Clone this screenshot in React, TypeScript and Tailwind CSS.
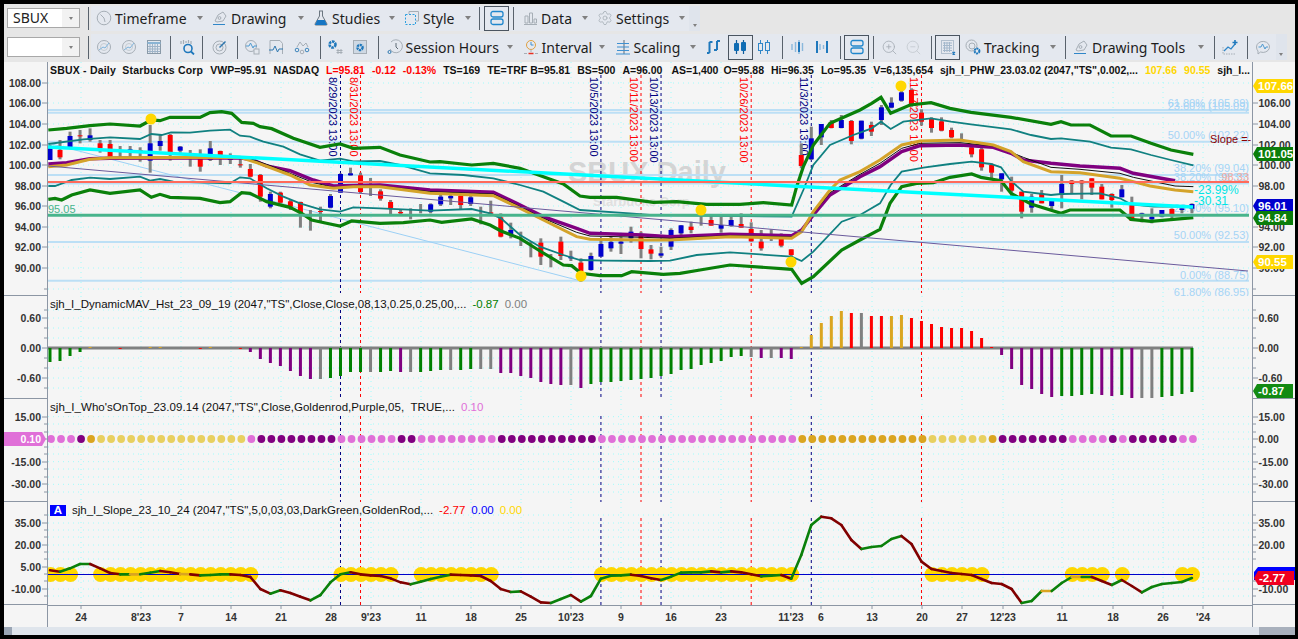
import { Settings, ZoomIn, ZoomOut } from 'lucide-react'
import type { ReactNode } from 'react'

const X = (i: number) => 50 + i * 10.017

// chart coordinates below were read off 3x crops: [x in crop, y in crop]
type Pts = number[][]
const crop = (ox: number, pts: Pts) => pts.map(([x, y]) => [ox + x / 3, 60 + y / 3])
const poly = (...parts: Pts[]) => parts.flat().map(p => p.join(',')).join(' ')

const upperGreen = poly(
  crop(0, [[145, 210], [200, 205], [270, 197], [330, 192], [420, 198], [454, 180], [480, 182], [510, 172], [600, 172], [630, 158], [665, 155], [695, 160], [725, 187], [760, 190], [780, 200], [815, 206], [880, 235], [960, 262], [1020, 252], [1060, 265], [1140, 262], [1200, 285], [1290, 306]]),
  crop(430, [[30, 305], [125, 315], [190, 310], [270, 325], [340, 350], [400, 372], [450, 408], [480, 412], [560, 412], [670, 427], [740, 425], [830, 433], [930, 433], [1000, 428], [1085, 435], [1100, 380], [1120, 320], [1150, 255], [1200, 190], [1290, 150]]),
  crop(860, [[35, 130], [63, 112], [92, 160], [150, 135], [213, 128], [270, 145], [333, 157], [453, 172], [573, 193], [603, 185], [633, 195], [690, 195], [753, 228], [813, 228], [873, 250], [933, 270], [1000, 283]]),
)
const upperTeal = poly(
  crop(0, [[145, 252], [250, 238], [330, 232], [420, 237], [454, 222], [485, 225], [513, 217], [570, 218], [630, 212], [690, 209], [720, 227], [750, 230], [790, 245], [850, 260], [900, 283], [960, 302], [1020, 296], [1060, 304], [1140, 303], [1200, 315], [1290, 340]]),
  crop(430, [[100, 345], [190, 355], [270, 375], [340, 395], [400, 425], [450, 450], [600, 460], [660, 465], [1085, 470], [1120, 390], [1150, 315], [1200, 255], [1270, 225], [1290, 218]]),
  crop(860, [[35, 205], [63, 185], [92, 207], [130, 185], [213, 175], [273, 185], [333, 193], [453, 208], [513, 225], [573, 237], [603, 235], [690, 245], [753, 263], [813, 268], [873, 285], [933, 300], [1000, 316]]),
)
const lowerTeal = poly(
  crop(0, [[145, 378], [165, 378], [215, 360], [270, 353], [330, 357], [420, 350], [450, 362], [480, 357], [520, 365], [690, 370], [720, 352], [750, 355], [800, 385], [850, 410], [900, 430], [960, 448], [1020, 455], [1060, 442], [1140, 445], [1290, 452]]),
  crop(430, [[125, 447], [180, 460], [213, 475], [270, 525], [330, 560], [400, 585], [450, 600], [520, 602], [660, 603], [720, 602], [800, 585], [900, 577], [1085, 590], [1115, 603], [1150, 575], [1235, 485], [1290, 465]]),
  crop(860, [[60, 430], [92, 375], [125, 335], [190, 323], [270, 312], [335, 305], [393, 312], [423, 322], [453, 363], [490, 395], [573, 405], [603, 402], [720, 400], [780, 415], [813, 433], [880, 440], [1000, 440]]),
)
const lowerGreen = poly(
  crop(0, [[145, 418], [165, 415], [185, 420], [215, 405], [270, 390], [330, 400], [420, 390], [454, 412], [480, 403], [510, 412], [600, 415], [660, 428], [690, 425], [725, 398], [750, 400], [800, 425], [870, 442], [905, 460], [935, 480], [990, 492], [1020, 498], [1055, 483], [1140, 490], [1210, 488], [1290, 480]]),
  crop(430, [[35, 487], [125, 477], [180, 495], [213, 513], [270, 535], [330, 573], [400, 615], [425, 617], [453, 640], [510, 647], [575, 647], [605, 635], [700, 643], [750, 640], [810, 630], [900, 615], [1085, 628], [1115, 670], [1150, 650], [1235, 570], [1290, 540]]),
  crop(860, [[60, 508], [90, 430], [125, 380], [170, 370], [220, 368], [270, 352], [335, 342], [363, 352], [423, 362], [453, 400], [513, 432], [603, 460], [630, 450], [780, 450], [813, 478], [873, 484], [1000, 473]]),
)
const purple = poly(
  crop(0, [[145, 312], [200, 308], [270, 296], [330, 295], [720, 293], [760, 300], [800, 318], [870, 332], [940, 360], [1000, 378], [1140, 375], [1290, 390]]),
  crop(430, [[190, 397], [260, 430], [340, 470], [440, 505], [480, 520], [640, 525], [720, 530], [900, 523], [1085, 527], [1115, 510], [1150, 465], [1200, 405], [1290, 350]]),
  crop(860, [[60, 320], [125, 275], [180, 257], [300, 255], [400, 262], [453, 280], [490, 300], [573, 310], [660, 318], [780, 325], [820, 340], [945, 362]]),
)
const blackMa = poly(
  crop(0, [[750, 296], [800, 313], [870, 340], [940, 368], [1000, 382], [1140, 378], [1290, 395]]),
  crop(430, [[190, 402], [260, 435], [340, 475], [440, 517], [480, 528], [640, 532], [720, 535], [900, 527], [1085, 531], [1115, 512], [1150, 460], [1200, 398], [1290, 343]]),
  crop(860, [[60, 310], [125, 265], [180, 250], [300, 248], [400, 258], [453, 277], [490, 292], [573, 322], [660, 328], [780, 340], [820, 352], [945, 378], [1000, 380]]),
)
const gold = poly(
  crop(0, [[145, 320], [200, 315], [270, 298], [330, 293], [720, 292], [770, 308], [870, 345], [930, 375], [1000, 385], [1060, 380], [1140, 380], [1290, 400]]),
  crop(430, [[190, 407], [260, 440], [340, 480], [440, 530], [480, 538], [640, 540], [720, 540], [900, 530], [1085, 535], [1115, 515], [1150, 455], [1200, 390], [1230, 360], [1290, 335]]),
  crop(860, [[60, 300], [125, 255], [180, 243], [300, 240], [400, 255], [453, 275], [490, 305], [573, 335], [660, 338], [780, 355], [820, 365], [870, 378], [945, 390], [1000, 395]]),
)

// wick top, wick bottom, body top, body bottom, colour
const candles: [number, number, number, number, string][] = [
  [255, 300, 265, 300, 'b'], [240, 298, 270, 292, 'r'], [215, 265, 228, 262, 'b'], [210, 250, 226, 228, 'r'], [205, 245, 226, 240, 'b'],
  [240, 278, 250, 265, 'r'], [240, 290, 252, 290, 'r'], [258, 292, 0, 0, 'g'], [258, 292, 268, 276, 'b'], [262, 305, 270, 272, 'r'],
  [195, 338, 250, 302, 'b'], [225, 272, 243, 258, 'b'], [222, 302, 225, 278, 'r'], [258, 278, 260, 272, 'b'], [270, 320, 0, 0, 'g'],
  [268, 335, 295, 320, 'r'], [243, 303, 265, 300, 'b'], [272, 315, 273, 288, 'r'], [280, 312, 288, 300, 'b'], [290, 323, 313, 315, 'r'],
  [312, 352, 327, 350, 'r'], [342, 425, 345, 410, 'r'], [395, 445, 402, 440, 'b'], [395, 430, 398, 428, 'r'], [418, 450, 424, 440, 'r'],
  [425, 503, 426, 460, 'r'], [450, 512, 0, 0, 'g'], [440, 487, 453, 455, 'r'], [402, 445, 408, 443, 'b'], [340, 398, 342, 398, 'b'],
  [323, 347, 340, 346, 'b'], [338, 400, 346, 396, 'r'], [354, 408, 0, 0, 'g'], [388, 422, 394, 416, 'r'], [420, 462, 426, 445, 'r'],
  [448, 462, 456, 460, 'r'], [445, 478, 0, 0, 'g'], [432, 460, 0, 0, 'g'], [430, 460, 433, 455, 'b'], [400, 438, 410, 433, 'b'],
  [395, 435, 408, 415, 'b'], [395, 450, 408, 435, 'r'], [400, 438, 412, 432, 'b'], [440, 493, 0, 0, 'g'], [422, 465, 457, 461, 'r'],
  [460, 532, 472, 530, 'r'], [488, 535, 510, 522, 'b'], [515, 558, 0, 0, 'g'], [545, 592, 0, 0, 'g'], [535, 615, 548, 590, 'r'],
  [582, 622, 0, 0, 'g'], [530, 600, 545, 588, 'r'], [572, 603, 590, 595, 'b'], [595, 665, 608, 633, 'r'], [578, 632, 588, 630, 'b'],
  [535, 590, 552, 590, 'b'], [530, 575, 546, 565, 'b'], [530, 582, 545, 551, 'b'], [500, 548, 515, 535, 'b'], [515, 595, 522, 567, 'r'],
  [555, 598, 568, 581, 'r'], [560, 592, 580, 587, 'b'], [505, 570, 510, 560, 'b'], [495, 535, 496, 520, 'b'], [485, 520, 500, 510, 'r'],
  [440, 497, 0, 0, 'g'], [465, 497, 480, 497, 'r'], [470, 518, 495, 506, 'b'], [470, 500, 480, 498, 'b'], [460, 503, 492, 503, 'r'],
  [487, 545, 507, 544, 'r'], [510, 572, 545, 565, 'r'], [508, 543, 0, 0, 'g'], [520, 562, 537, 557, 'r'], [568, 588, 568, 585, 'r'],
  [250, 325, 285, 318, 'r'], [200, 300, 235, 298, 'b'], [195, 255, 192, 232, 'b'], [180, 205, 186, 204, 'r'], [165, 205, 180, 204, 'b'],
  [180, 253, 183, 243, 'r'], [182, 238, 182, 236, 'b'], [185, 228, 195, 215, 'r'], [135, 195, 142, 180, 'b'], [112, 145, 128, 143, 'b'],
  [90, 125, 97, 122, 'b'], [85, 140, 90, 135, 'r'], [148, 197, 158, 185, 'r'], [172, 218, 175, 204, 'r'], [172, 214, 184, 212, 'r'],
  [203, 235, 210, 232, 'r'], [220, 245, 0, 0, 'g'], [258, 292, 262, 283, 'r'], [260, 332, 268, 322, 'r'], [310, 355, 315, 338, 'r'],
  [340, 395, 340, 358, 'b'], [350, 415, 365, 392, 'r'], [395, 475, 395, 455, 'r'], [402, 458, 410, 443, 'b'], [390, 430, 400, 430, 'r'],
  [420, 447, 422, 438, 'b'], [345, 445, 372, 405, 'b'], [360, 400, 362, 372, 'r'], [360, 418, 362, 370, 'r'], [355, 405, 355, 383, 'r'],
  [372, 418, 380, 418, 'r'], [400, 443, 402, 420, 'r'], [375, 412, 388, 412, 'b'], [410, 480, 433, 482, 'r'], [458, 487, 460, 465, 'b'],
  [445, 490, 470, 478, 'b'], [450, 472, 450, 470, 'b'], [445, 475, 447, 463, 'r'], [445, 460, 445, 450, 'b'], [430, 460, 432, 446, 'b'],
]
const candleFill: Record<string, string> = { b: '#0000cd', r: '#ff0000' }

// positive = below the zero line, px
const hist: [number, string][] = [
  [14, 'g'], [13, 'g'], [8, 'g'], [4, 'g'], [-1, 'y'], [0, 'x'], [0, 'x'], [1, 'r'], [0, 'x'], [0, 'x'], [-1, 'y'], [-1, 'y'], [0, 'x'], [0, 'x'], [0, 'x'], [1, 'r'], [-1, 'y'], [0, 'x'], [0, 'x'], [1, 'r'],
  [4, 'p'], [11, 'p'], [15, 'p'], [18, 'p'], [23, 'p'], [28, 'p'], [31, 'p'], [31, 'a'], [30, 'g'], [28, 'g'], [24, 'g'], [24, 'g'], [24, 'a'], [24, 'g'], [23, 'g'], [24, 'p'], [24, 'a'], [24, 'g'], [23, 'g'], [22, 'g'],
  [22, 'a'], [22, 'g'], [21, 'g'], [21, 'a'], [21, 'a'], [25, 'p'], [25, 'p'], [28, 'p'], [30, 'p'], [34, 'p'], [36, 'p'], [37, 'p'], [37, 'a'], [40, 'p'], [36, 'g'], [34, 'g'], [34, 'g'], [33, 'g'], [32, 'g'], [31, 'g'],
  [30, 'g'], [28, 'g'], [26, 'g'], [22, 'g'], [21, 'g'], [17, 'g'], [15, 'g'], [13, 'g'], [9, 'g'], [8, 'g'], [9, 'a'], [10, 'p'], [10, 'a'], [10, 'p'], [11, 'p'], [-1, 'y'], [-13, 'y'], [-25, 'y'], [-32, 'y'], [-37, 'y'],
  [-35, 'r'], [-35, 'a'], [-32, 'r'], [-32, 'r'], [-32, 'y'], [-33, 'y'], [-30, 'r'], [-27, 'r'], [-24, 'r'], [-21, 'r'], [-20, 'r'], [-20, 'r'], [-17, 'r'], [-10, 'r'], [-1, 'r'], [7, 'p'], [21, 'p'], [37, 'p'], [41, 'p'], [46, 'p'],
  [49, 'p'], [48, 'g'], [48, 'g'], [47, 'g'], [46, 'g'], [47, 'p'], [48, 'p'], [47, 'g'], [50, 'p'], [50, 'a'], [50, 'a'], [49, 'g'], [48, 'g'], [46, 'g'], [44, 'g'],
]
const histFill: Record<string, string> = { g: '#008000', p: '#800080', a: '#808080', y: '#daa520', r: '#ff0000', x: 'none' }

// run ends of the dot colours
const dotRuns: [number, string][] = [
  [2, '#e070d8'], [3, '#800080'], [4, '#daa520'], [19, '#e8d060'], [20, '#e070d8'], [28, '#800080'], [34, '#e070d8'], [36, '#800080'], [44, '#e070d8'], [54, '#800080'], [74, '#e070d8'],
  [87, '#daa520'], [93, '#e8d060'], [94, '#daa520'], [101, '#800080'], [105, '#e070d8'], [106, '#800080'], [107, '#e070d8'], [112, '#800080'], [114, '#e070d8'],
]
const dotColor = (i: number) => dotRuns.find(r => i <= r[0])![1]

const slope = [
  226, 230, 220, 207, 207, 220, 234, 238, 238, 238, 233, 228, 232, 237, 238, 241, 240, 238, 238, 240, 246, 282, 296, 286, 294, 305, 316, 300, 262, 238,
  232, 238, 241, 243, 250, 262, 268, 260, 252, 245, 239, 240, 241, 243, 258, 282, 291, 289, 305, 322, 324, 312, 300, 320, 303, 251, 242, 241, 239, 243,
  250, 255, 245, 233, 232, 232, 229, 232, 229, 232, 238, 244, 242, 240, 251, 180, 90, 65, 70, 90, 135, 162, 156, 153, 132, 123, 147, 200, 222, 228,
  234, 237, 240, 252, 264, 267, 282, 324, 318, 288, 288, 264, 246, 246, 246, 258, 270, 255, 273, 292, 276, 267, 264, 261, 249,
]
const slopeGold = [8, 13, 99, 102]
const slopeY = (i: number) => 495 + slope[i] / 3
const slopeDots = [[0, 2], [5, 20], [29, 34], [37, 44], [55, 74], [88, 93], [102, 105], [107, 107], [113, 114]]

const dashes = [
  { i: 29, c: '#000080', t: '8/29/2023 13:00' },
  { i: 31, c: '#ff0000', t: '8/31/2023 13:00' },
  { i: 55, c: '#000080', t: '10/5/2023 13:00' },
  { i: 59, c: '#ff0000', t: '10/11/2023 13:00' },
  { i: 61, c: '#000080', t: '10/13/2023 13:00' },
  { i: 70, c: '#ff0000', t: '10/26/2023 13:00' },
  { i: 76, c: '#000080', t: '11/3/2023 13:00' },
  { i: 87, c: '#ff0000', t: '11/17/2023 13:00' },
]

const dateTicks: [number, string][] = [
  [81, '24'], [141, "8'23"], [181, '7'], [231, '14'], [281, '21'], [331, '28'], [371, "9'23"], [421, '11'], [471, '18'], [521, '25'], [571, "10'23"], [621, '9'],
  [671, '16'], [721, '23'], [791, "11'23"], [821, '6'], [872, '13'], [922, '20'], [962, '27'], [1003, "12'23"], [1062, '11'], [1113, '18'], [1163, '26'], [1203, "'24"],
]

const fibLabels: [number, string][] = [
  [107, '61.80% (105.89)'], [110, '23.60% (105.09)'], [139, '50.00% (102.22)'], [172, '38.20% (99.04)'], [181, '38.20% (98.35)'],
  [212, '23.60% (95.10)'], [239, '50.00% (92.53)'], [279, '0.00% (88.75)'], [296, '61.80% (86.95)'],
]

function Grid({ top, bottom, rows }: { top: number; bottom: number; rows: number[] }) {
  return (
    <g stroke="#9ffcfc" strokeWidth={1} strokeDasharray="1 4">
      {rows.map(y => <line key={y} x1={48} x2={1252} y1={y} y2={y} />)}
      {dateTicks.map(([x]) => <line key={x} x1={x} x2={x} y1={top} y2={bottom} />)}
    </g>
  )
}

function Dashes({ top, bottom }: { top: number; bottom: number }) {
  return (
    <g strokeWidth={1} strokeDasharray="3 3">
      {dashes.map(d => <line key={d.i} x1={X(d.i)} x2={X(d.i)} y1={top} y2={bottom} stroke={d.c} />)}
    </g>
  )
}

function AxisLabels({ side, top, height, labels, minor = [], children }: {
  side: 'l' | 'r'
  top: number
  height: number
  labels: [number, string][]
  minor?: number[]
  children?: ReactNode
}) {
  const left = side === 'l'
  const x1 = left ? 42 : 1253
  const x2 = left ? 47 : 1258
  return (
    <svg viewBox={`${left ? 4 : 1253} ${top} ${left ? 43 : 42} ${height}`} className={`block h-full ${left ? 'w-[43px]' : 'w-[42px]'}`}>
      {labels.map(([y, t]) => (
        <g key={t}>
          <line x1={x1} x2={x2} y1={y} y2={y} stroke="#8c96a4" />
          <text x={left ? 41 : 1258.5} y={y + 4} textAnchor={left ? 'end' : 'start'} className="fill-[#333] text-[10.5px] font-bold">{t}</text>
        </g>
      ))}
      {minor.map(y => <line key={y} x1={x1 + (left ? 2 : 0)} x2={x2 - (left ? 0 : 2)} y1={y} y2={y} stroke="#8c96a4" />)}
      {children}
    </svg>
  )
}

function Tag({ y, fill, text, x = 1253, w = 40, color = 'white' }: { y: number; fill: string; text: string; x?: number; w?: number; color?: string }) {
  return (
    <g>
      <polygon points={`${x},${y} ${x + 4},${y - 7} ${x + w},${y - 7} ${x + w},${y + 7} ${x + 4},${y + 7}`} fill={fill} />
      <text x={x + 5} y={y + 4} fill={color} className="text-[11.5px] font-bold">{text}</text>
    </g>
  )
}

function Pane({ className, left, right, children }: { className: string; left: ReactNode; right: ReactNode; children: ReactNode }) {
  return (
    <div className={`flex shrink-0 ${className}`}>
      <div className="w-[44px] border-r border-b border-[#8c96a4]">{left}</div>
      <div className="relative w-[1204px] overflow-hidden">{children}</div>
      <div className="w-[43px] border-l border-b border-[#8c96a4]">{right}</div>
    </div>
  )
}

function Legend({ className = '', children }: { className?: string; children: ReactNode }) {
  return <div className={`absolute left-[2px] flex items-center whitespace-pre text-[#111] ${className}`}>{children}</div>
}

function MainPane() {
  return (
    <Pane
      className="h-[234px]"
      left={
        <AxisLabels side="l" top={62} height={233} minor={[289]} labels={[[83, '108.00'], [103, '106.00'], [124, '104.00'], [145, '102.00'], [165, '100.00'], [186, '98.00'], [206, '96.00'], [227, '94.00'], [247, '92.00'], [268, '90.00']]} />
      }
      right={
        <AxisLabels side="r" top={62} height={233} minor={[289]} labels={[[103, '106.00'], [124, '104.00'], [145, '102.00'], [165, '100.00'], [186, '98.00'], [227, '94.00'], [247, '92.00'], [268, '90.00']]}>
          <Tag y={86} fill="#ffd700" text="107.66" />
          <Tag y={154} fill="#0a7d0a" text="101.05" />
          <Tag y={206} fill="#0000cd" text="96.01" />
          <Tag y={218} fill="#0a7d0a" text="94.84" />
          <Tag y={262} fill="#ffd700" text="90.55" />
        </AxisLabels>
      }
    >
      <svg viewBox="48 62 1204 234" className="block h-[234px] w-[1204px]">
        <Grid top={62} bottom={296} rows={[83, 103, 124, 145, 165, 186, 206, 227, 247, 268, 289]} />
        <text x={568} y={182} className="fill-[#d4d4d4] text-[29px] font-bold">SBUX Daily</text>
        <text x={593} y={206} className="fill-[#e0e0e0] text-[13px] font-bold">Starbucks Corp</text>
        <g stroke="#bcdff5" strokeWidth={2}>
          {[110, 112.7, 141.7, 175, 183.5, 242, 280.7].map(y => <line key={y} x1={48} x2={1249} y1={y} y2={y} />)}
        </g>
        <line x1={48} y1={143} x2={581} y2={281} stroke="#9cd0f5" />
        <Dashes top={75} bottom={293} />
        {dashes.map(d => (
          <text key={d.i} transform={`translate(${X(d.i) - 11},77) rotate(90)`} fill={d.c} className="text-[11px]">{d.t}</text>
        ))}
        {fibLabels.map(([y, t]) => (
          <text key={t} x={1249} y={y} textAnchor="end" className="fill-[#a5d4f5] text-[11px]">{t}</text>
        ))}
        <text x={1249} y={181} textAnchor="end" className="fill-[#f4a9a0] text-[11px]">98.33</text>
        {candles.map(([wt, wb, bt, bb, c], i) => (
          <g key={i}>
            <rect x={X(i) - 1.5} y={60 + wt / 3} width={3} height={(wb - wt) / 3} fill="#808080" />
            {bb > 0 && <rect x={X(i) - 2.5} y={60 + bt / 3} width={5} height={Math.max((bb - bt) / 3, 1)} fill={candleFill[c]} />}
          </g>
        ))}
        <polyline points={upperTeal} fill="none" stroke="#108080" strokeWidth={1.8} />
        <polyline points={lowerTeal} fill="none" stroke="#108080" strokeWidth={1.8} />
        <polyline points={upperGreen} fill="none" stroke="#0a800a" strokeWidth={3.2} />
        <polyline points={lowerGreen} fill="none" stroke="#0a800a" strokeWidth={3.2} />
        <polyline points={purple} fill="none" stroke="#800080" strokeWidth={3.5} />
        <polyline points={blackMa} fill="none" stroke="#111" strokeWidth={1} />
        <polyline points={gold} fill="none" stroke="#d4a32a" strokeWidth={3} />
        <line x1={48} y1={166} x2={1248} y2={271} stroke="#6a5a9c" />
        <line x1={48} y1={147} x2={1193} y2={207} stroke="#00ffff" strokeWidth={3.5} />
        <line x1={48} y1={182} x2={1249} y2={182} stroke="#ff6a5a" strokeWidth={2} />
        <line x1={48} y1={215.3} x2={1249} y2={215.3} stroke="#48b48c" strokeWidth={3} />
        {[[151, 119], [581, 276], [701, 210], [791, 262], [901, 86]].map(([x, y]) => <circle key={x} cx={x} cy={y} r={5.5} fill="#ffd700" />)}
        <text x={48} y={213} className="fill-[#48b48c] text-[11px]">95.05</text>
        <text x={1210} y={143} className="fill-[#8b0000] text-[11px]">Slope =-</text>
        <text x={1194} y={194} className="fill-[#00e5e5] text-[12px]">-23.99%</text>
        <text x={1194} y={205} className="fill-[#00e5e5] text-[12px]">-30.31</text>
      </svg>
      <Legend className="top-[1px] gap-[7px] text-[10.5px] font-bold">
        <span className="tracking-[0.2px]">SBUX - Daily  Starbucks Corp</span>
        <span>VWP=95.91</span>
        <span>NASDAQ</span>
        <span className="text-[#ff0000]">L=95.81</span>
        <span className="text-[#ff0000]">-0.12</span>
        <span className="text-[#ff0000]">-0.13%</span>
        <span>TS=169</span>
        <span>TE=TRF</span>
        <span className="-ml-[4px]">B=95.81</span>
        <span>BS=500</span>
        <span>A=96.00</span>
        <span className="ml-[2px]">AS=1,400</span>
        <span className="-ml-[2px]">O=95.88</span>
        <span>Hi=96.35</span>
        <span>Lo=95.35</span>
        <span>V=6,135,654</span>
        <span>sjh_I_PHW_23.03.02 (2047,"TS",0.002,...</span>
        <span className="text-[#ffd700]">107.66</span>
        <span className="text-[#ffd700]">90.55</span>
        <span>sjh_I...</span>
      </Legend>
    </Pane>
  )
}

function HistPane() {
  return (
    <Pane
      className="h-[103px]"
      left={<AxisLabels side="l" top={296} height={102} minor={[310, 328, 338, 358, 368, 388]} labels={[[318, '0.60'], [348, '0.00'], [378, '-0.60']]} />}
      right={
        <AxisLabels side="r" top={296} height={102} minor={[310, 328, 338, 358, 368]} labels={[[318, '0.60'], [348, '0.00'], [378, '-0.60']]}>
          <Tag y={391} fill="#128a12" text="-0.87" />
        </AxisLabels>
      }
    >
      <svg viewBox="48 296 1204 103" className="block h-[103px] w-[1204px]">
        <Grid top={296} bottom={399} rows={[310, 318, 328, 338, 348, 358, 368, 378, 388]} />
        <Dashes top={310} bottom={399} />
        <rect x={48} y={346.5} width={1145} height={3} fill="#808080" />
        {hist.map(([v, c], i) => (
          <rect key={i} x={X(i) - 1.5} y={v > 0 ? 348 : 348 + v} width={3} height={Math.abs(v)} fill={histFill[c]} />
        ))}
      </svg>
      <Legend className="top-0 gap-[6px] text-[11.5px]">
        <span>sjh_I_DynamicMAV_Hst_23_09_19 (2047,"TS",Close,Close,08,13,0.25,0.25,00,...</span>
        <span className="text-[#008000]">-0.87</span>
        <span className="text-[#808080]">0.00</span>
      </Legend>
    </Pane>
  )
}

function DotsPane() {
  const rows = [416.7, 424, 432, 439, 447, 454, 461.7, 469, 477, 484.3, 492]
  return (
    <Pane
      className="h-[103px]"
      left={
        <AxisLabels side="l" top={399} height={102} minor={[424, 432, 447, 454, 469, 477, 492]} labels={[[417, '15.00'], [439, '0.10'], [462, '-15.00'], [484, '-30.00']]}>
          <polygon points="4,432 42,432 46,439 42,446 4,446" fill="#e070d8" />
          <text x={41} y={443} textAnchor="end" className="fill-white text-[10.5px] font-bold">0.10</text>
        </AxisLabels>
      }
      right={<AxisLabels side="r" top={399} height={102} minor={[424, 432, 447, 454, 469, 477, 492]} labels={[[417, '15.00'], [439, '0.00'], [462, '-15.00'], [484, '-30.00']]} />}
    >
      <svg viewBox="48 399 1204 103" className="block h-[103px] w-[1204px]">
        <Grid top={399} bottom={502} rows={rows} />
        <Dashes top={416} bottom={502} />
        {hist.map((_, i) => <circle key={i} cx={X(i) + 1} cy={439} r={3.9} fill={dotColor(i)} />)}
      </svg>
      <Legend className="top-0 gap-[6px] text-[11.5px]">
        <span className="tracking-[0.05px]">sjh_I_Who'sOnTop_23.09.14 (2047,"TS",Close,Goldenrod,Purple,05,  TRUE,...</span>
        <span className="text-[#e070d8]">0.10</span>
      </Legend>
    </Pane>
  )
}

function SlopePane() {
  return (
    <Pane
      className="h-[103px]"
      left={<AxisLabels side="l" top={502} height={102} minor={[515, 530, 537, 552, 559, 574, 581, 596]} labels={[[523, '35.00'], [545, '20.00'], [567, '5.00'], [589, '-10.00']]} />}
      right={
        <AxisLabels side="r" top={502} height={102} minor={[515, 530, 537, 552, 559, 581, 596]} labels={[[523, '35.00'], [545, '20.00'], [589, '-10.00']]}>
          <polygon points="1254,572 1258,567 1295,567 1295,580 1254,580" fill="#0000ff" />
          <Tag y={578} fill="#f00020" text="-2.77" x={1254} />
        </AxisLabels>
      }
    >
      <svg viewBox="48 502 1204 103" className="block h-[103px] w-[1204px]">
        <Grid top={502} bottom={605} rows={[515, 523, 530, 537, 545, 552, 559, 567, 574, 581, 589, 596]} />
        <Dashes top={518} bottom={605} />
        {slopeDots.flatMap(([a, b]) => Array.from({ length: b - a + 1 }, (_, k) => a + k)).map(i => (
          <ellipse key={i} cx={X(i) + 0.5} cy={574.5} rx={7.5} ry={7.5} fill="#ffd700" />
        ))}
        <line x1={48} x2={1193} y1={574.5} y2={574.5} stroke="#0000cd" strokeWidth={1.2} />
        {slope.slice(1).map((v, k) => {
          const c = slopeGold.includes(k) ? '#daa520' : v <= slope[k] ? '#0a800a' : '#800000'
          return <line key={k} x1={X(k)} x2={X(k + 1)} y1={slopeY(k)} y2={slopeY(k + 1)} stroke={c} strokeWidth={2.6} strokeLinecap="round" />
        })}
      </svg>
      <Legend className="top-0 gap-[6px] text-[11.5px]">
        <span className="h-[11px] w-[16px] bg-[#0000ff] text-center leading-[11px] font-bold text-white">A</span>
        <span>sjh_I_Slope_23_10_24 (2047,"TS",5,0,03,03,DarkGreen,GoldenRod,...</span>
        <span className="text-[#ff0000]">-2.77</span>
        <span className="text-[#0000ff]">0.00</span>
        <span className="text-[#ffd700]">0.00</span>
      </Legend>
    </Pane>
  )
}

function DateAxis() {
  return (
    <div className="flex h-[22px] shrink-0">
      <div className="w-[44px] border-r border-[#8c96a4]" />
      <svg viewBox="48 605 1204 22" className="block h-[22px] w-[1204px]">
        <line x1={48} x2={1252} y1={605.5} y2={605.5} stroke="#8c96a4" />
        {dateTicks.map(([x, t]) => (
          <g key={x}>
            <line x1={x} x2={x} y1={605} y2={609} stroke="#8c96a4" />
            <text x={x} y={621} textAnchor="middle" className="fill-[#333] text-[10.5px] font-bold">{t}</text>
          </g>
        ))}
      </svg>
      <div className="w-[43px] border-l border-[#8c96a4]" />
    </div>
  )
}

const BLUE = '#2f86c8'
const GREY = '#a6aeb6'

function Ico({ children }: { children: ReactNode }) {
  return <svg viewBox="0 0 16 16" fill="none" className="h-4 w-4 shrink-0">{children}</svg>
}

const ClockIcon = () => <Ico><circle cx={8} cy={8} r={6.8} stroke={GREY} /><path d="M8 8 4.5 4.5M8 8l1 4" stroke={GREY} /></Ico>
const PenIcon = () => <Ico><path d="M3 11 6 5l5-3 3 4-3 5-6 1Z" stroke={GREY} /><circle cx={7.5} cy={8} r={1.4} stroke={GREY} /><path d="M1 14.5h12" stroke={BLUE} /></Ico>
const FlaskIcon = () => <Ico><path d="M6 1h4M6.5 1v5L2 14q-.4 1 1 1h10q1.4 0 1-1L9.5 6V1" stroke="#6b7680" /><path d="M4.3 10h7.4L14 15H2Z" fill="#1676c4" /></Ico>
const StyleIcon = () => <Ico><path d="M5 4V1.5h9.5V11H12" stroke={GREY} /><rect x={1.5} y={4.5} width={10} height={10} stroke="#2ea0e0" strokeDasharray="2 1.5" /></Ico>
const BarsIcon = () => <Ico><path d="M2 14.5h13" stroke={GREY} /><path d="M3 6h3v7H3zM7.5 3h3v10h-3zM12 9h2.5v4H12z" stroke={GREY} /></Ico>
const LayoutIcon = () => <Ico><rect x={2} y={1.5} width={12} height={5.5} rx={2} stroke="#1f86cc" strokeWidth={1.3} /><rect x={2} y={9} width={12} height={5.5} rx={2} stroke="#1f86cc" strokeWidth={1.3} /></Ico>
const RadarA = () => <Ico><circle cx={8} cy={8} r={6.5} stroke={GREY} /><circle cx={8} cy={8} r={3.5} stroke="#c6ccd2" /><path d="m3 11 4-3 2 1 4-5" stroke="#7fb4dc" /></Ico>
const GridIcon = () => <Ico><rect x={1.5} y={1.5} width={13} height={13} stroke="#8a9aa8" /><path d="M1.5 4h13" stroke="#8ab4d4" strokeWidth={2} /><path d="M4 5v9M6.5 5v9M9 5v9M11.5 5v9M2 7.5h12M2 10h12M2 12.5h12" stroke="#9fb4c8" /></Ico>
const SearchIco = () => <Ico><path d="M2 5V2M4.5 5V1M7 4V2M9.5 4V1M12 5V2" stroke={GREY} strokeWidth={1.2} /><circle cx={9} cy={9.5} r={4} stroke="#1f78bc" strokeWidth={1.6} /><path d="m12 12.5 3 3" stroke="#1f78bc" strokeWidth={1.8} /></Ico>
const TargetIcon = () => <Ico><circle cx={7.5} cy={8.5} r={6.5} stroke={GREY} /><circle cx={7.5} cy={8.5} r={3.5} stroke={GREY} /><path d="m7.5 8.5 6-6" stroke="#2f78b0" strokeWidth={1.5} /></Ico>
const PulseIcon = () => <Ico><circle cx={7} cy={7} r={5.5} stroke={GREY} /><path d="M2 7h3l1.5-3L9 9l1-2h3" stroke="#4f9ad0" /><rect x={10} y={10} width={5} height={5} fill="#e4e8ee" stroke={GREY} /></Ico>
const ChartBoxIcon = () => <Ico><path d="M2 15V1.5h10l2.5 3V15" stroke={GREY} /><path d="M1 11h4l2-4 2.5 6L11 10h4" stroke="#2f78b0" /></Ico>
const NodesIcon = () => <Ico><path d="M3 8 6 3l3 4 3-3 2 4" stroke={GREY} /><circle cx={3} cy={11} r={1.8} stroke="#3f86bc" /><circle cx={8} cy={13} r={1.8} stroke={GREY} /><circle cx={13} cy={11} r={1.8} stroke="#3f86bc" /></Ico>
const GearHash = () => <Ico><circle cx={5.5} cy={5.5} r={3} stroke="#1f78bc" strokeWidth={2.6} strokeDasharray="2.5 .8" /><path d="M11 10v5M14 10v5M9.5 11.5h6M9.5 13.5h6" stroke={GREY} /></Ico>
const GearBox = () => <Ico><rect x={1.5} y={1.5} width={13} height={13} fill="#cfd9e4" stroke={GREY} /><circle cx={8} cy={8.5} r={2.6} stroke="#1f78bc" strokeWidth={2.4} strokeDasharray="2.2 .7" /></Ico>
const SessionIcon = () => <Ico><path d="M4 3a6.5 6.5 0 1 1-1 7" stroke={GREY} /><path d="M9 4v4l2 2" stroke="#5f6a74" /><circle cx={2.5} cy={13} r={1.5} stroke="#2f78b0" /></Ico>
const HourIcon = () => <Ico><circle cx={8} cy={6} r={4.5} stroke="#e0a040" /><path d="M8 3v3h2.5" stroke="#3f90d0" /><path d="M8 10.5V13" stroke={GREY} /><path d="M1 14.5h3" stroke={GREY} /><path d="M5.5 14.5h5" stroke="#e83020" strokeWidth={1.5} /><path d="M12 14.5h3" stroke={GREY} /></Ico>
const ScaleIcon = () => <Ico><path d="M9 1v14" stroke="#5f6a74" /><path d="M2 4.5h12M2 8h12M2 11.5h12M1 15h14" stroke="#3f90d0" /></Ico>
const NotesIcon = () => <Ico><path d="M4.5 3v11M12 2v9" stroke="#1f78bc" strokeWidth={2} /><path d="M4.5 3h3M12 2h3M2 14h2.5M9 11h3" stroke="#1f78bc" strokeWidth={2} /></Ico>
const CandlesFilled = () => <Ico><path d="M4.5 1v14M11.5 1v14" stroke="#0f5c9c" strokeWidth={1.2} /><rect x={2} y={4} width={5} height={8} rx={1} fill="#0f6cb4" /><rect x={9} y={3} width={5} height={9} rx={1} fill="#0f6cb4" /></Ico>
const CandlesOpen = () => <Ico><path d="M4.5 1v14M11.5 1v14" stroke={BLUE} /><rect x={2.5} y={4.5} width={4} height={7} fill="#e4e8ee" stroke={BLUE} /><rect x={9.5} y={3.5} width={4} height={8} fill="#e4e8ee" stroke={BLUE} /></Ico>
const SpreadA = () => <Ico><path d="M2 5v6M5.5 3v10M9 1v14M12.5 4v8" stroke="#8ab8dc" strokeWidth={1.4} /><path d="M8 3h2v10H8z" fill="#1f78bc" /></Ico>
const SpreadB = () => <Ico><path d="M2 2h2v12H2z" fill="#1f78bc" /><path d="M12 2h2v12h-2z" fill="#1f78bc" /><path d="M6 5v6M9.5 6v4" stroke="#8ab8dc" strokeWidth={1.4} /></Ico>
const SelectGrid = () => <Ico><rect x={1.5} y={1.5} width={12} height={13} stroke="#7f96ac" strokeDasharray="1 1" /><path d="M3 4h9M3 6.5h9M3 9h9M3 11.5h9M4.5 3v10M7 3v10M9.5 3v10" stroke="#a4b8cc" /><path d="m12.5 13 2.5 2.5m0-2.5-2.5 2.5" stroke="#1f78bc" strokeWidth={1.2} /></Ico>
const TrackIcon = () => <Ico><circle cx={6.5} cy={6.5} r={5.5} stroke={GREY} /><circle cx={7} cy={7} r={3} stroke={GREY} /><circle cx={12} cy={12} r={2.4} stroke="#1f78bc" strokeWidth={2} strokeDasharray="1.8 .6" /></Ico>
const TrendPlus = () => <Ico><path d="M1 8v7h13" stroke={GREY} strokeDasharray="1.5 1" /><path d="m2 12 4-4 3 2 4-5" stroke="#2f86c8" strokeWidth={1.3} /><path d="M13 1v5M10.5 3.5h5" stroke="#1f78bc" strokeWidth={1.6} /></Ico>
const BubbleIcon = () => <Ico><path d="M1.5 8a6.5 5.5 0 1 1 4 5L3 15v-3q-1.5-1.5-1.5-4Z" stroke={GREY} /><path d="M3.5 8H6l1.5-3L10 10l1-2h2" stroke="#4f9ad0" /></Ico>

const Arrow = ({ small }: { small?: boolean }) => (
  <span className={`h-0 w-0 shrink-0 border-x-transparent border-t-[#808080] ${small ? 'border-x-[2.5px] border-t-[3px]' : 'border-x-[3.5px] border-t-[4px]'}`} />
)

function Menu({ icon, label, className }: { icon: ReactNode; label: string; className: string }) {
  return (
    <div className={`flex h-full shrink-0 items-center pl-[5px] pr-[4.5px] ${className}`}>
      {icon}
      <span className="ml-[3px] flex-1 text-[14px] text-[#1c1c1c]">{label}</span>
      <Arrow />
    </div>
  )
}

const Sep = ({ className = '' }: { className?: string }) => <span className={`h-[23px] w-px shrink-0 bg-[#59626c] ${className}`} />

function Btn({ className, boxed, children }: { className: string; boxed?: boolean; children: ReactNode }) {
  return (
    <div className={`flex shrink-0 items-center justify-center ${boxed ? 'h-[25px] border border-[#4b5560]' : 'h-full'} ${className}`}>
      {children}
    </div>
  )
}

function Combo({ value }: { value?: string }) {
  return (
    <div className="flex h-[20px] w-[73px] shrink-0 items-center border border-[#a8a8a8] bg-white">
      <span className="w-[54px] pl-[5px] text-[14px] leading-none text-[#222]">{value}</span>
      <span className="flex h-full flex-1 items-center justify-center bg-[#f2f2f2]"><Arrow small /></span>
    </div>
  )
}

function Toolbars() {
  return (
    <div className="font-['Noto_Sans',sans-serif]">
      <div className="flex h-[28px] items-center pl-[3px]">
        <Combo value="SBUX" />
        <Sep className="ml-[8px]" />
        <div className="ml-[2px] flex h-[25px] w-[609px] items-center bg-[#e4e8ef]">
          <Menu icon={<ClockIcon />} label="Timeframe" className="w-[116px]" />
          <Menu icon={<PenIcon />} label="Drawing" className="w-[101px]" />
          <Menu icon={<FlaskIcon />} label="Studies" className="w-[91px]" />
          <Menu icon={<StyleIcon />} label="Style" className="w-[76px]" />
          <Sep className="ml-[4px]" />
          <Btn boxed className="ml-[4px] w-[25px]"><LayoutIcon /></Btn>
          <Sep className="ml-[4px]" />
          <Menu icon={<BarsIcon />} label="Data" className="ml-[3px] w-[75px]" />
          <Menu icon={<Settings size={16} strokeWidth={1.2} color={GREY} />} label="Settings" className="w-[97px]" />
          <div className="flex h-full w-[11px] items-end justify-center bg-[#dfe4ec] pb-[4px]"><Arrow small /></div>
        </div>
      </div>
      <div className="flex h-[30px] items-center pl-[3px]">
        <Combo />
        <Sep className="ml-[8px]" />
        <div className="ml-[2px] flex h-[26px] w-[1196px] items-center bg-[#e4e8ef]">
          <Btn className="w-[25px]"><RadarA /></Btn>
          <Btn className="w-[25px]"><RadarA /></Btn>
          <Btn className="w-[25px]"><GridIcon /></Btn>
          <Sep className="ml-[4px]" />
          <Btn className="ml-[3px] w-[25px]"><SearchIco /></Btn>
          <Sep className="ml-[3px]" />
          <Btn className="ml-[4.5px] w-[25px]"><TargetIcon /></Btn>
          <Sep className="ml-[4px]" />
          <Btn className="ml-[3px] w-[23px]"><PulseIcon /></Btn>
          <Btn className="w-[25px]"><ChartBoxIcon /></Btn>
          <Btn className="w-[26px]"><NodesIcon /></Btn>
          <Sep className="ml-[5px]" />
          <Btn className="ml-[3px] w-[22px]"><GearHash /></Btn>
          <Btn className="w-[29px]"><GearBox /></Btn>
          <Sep className="ml-[3px]" />
          <Menu icon={<SessionIcon />} label="Session Hours" className="ml-[3px] w-[136px]" />
          <Menu icon={<HourIcon />} label="Interval" className="w-[92px]" />
          <Menu icon={<ScaleIcon />} label="Scaling" className="w-[91px]" />
          <Btn className="w-[25px]"><NotesIcon /></Btn>
          <Btn boxed className="ml-[2px] w-[25px]"><CandlesFilled /></Btn>
          <Btn className="ml-[0.5px] w-[22px]"><CandlesOpen /></Btn>
          <Sep className="ml-[7px]" />
          <Btn className="ml-[2.5px] w-[24px]"><SpreadA /></Btn>
          <Btn className="w-[25px]"><SpreadB /></Btn>
          <Sep className="ml-[5.5px]" />
          <Btn boxed className="ml-[3px] w-[25px]"><LayoutIcon /></Btn>
          <Sep className="ml-[4px]" />
          <Btn className="ml-[3px] w-[24px]"><ZoomIn size={17} strokeWidth={1.2} color={GREY} /></Btn>
          <Btn className="w-[25px]"><ZoomOut size={17} strokeWidth={1.2} color="#c4cad0" /></Btn>
          <Sep className="ml-[5px]" />
          <Btn boxed className="ml-[3px] w-[25px]"><SelectGrid /></Btn>
          <Menu icon={<TrackIcon />} label="Tracking" className="w-[100px]" />
          <Sep className="ml-[5px]" />
          <Menu icon={<PenIcon />} label="Drawing Tools" className="ml-[2px] w-[140.5px]" />
          <Sep className="ml-[5px]" />
          <Btn className="ml-[2.5px] w-[26px]"><TrendPlus /></Btn>
          <Sep className="ml-[3.7px]" />
          <Btn className="ml-[4px] w-[23px]"><BubbleIcon /></Btn>
          <div className="ml-[1.3px] flex h-full w-[11px] items-end justify-center bg-[#dfe4ec] pb-[4px]"><Arrow small /></div>
        </div>
      </div>
    </div>
  )
}

export default function App() {
  return (
    <div className="h-[639px] w-[1298px] overflow-hidden bg-black pl-[4px] pt-[4px] font-['Liberation_Sans',Arial,sans-serif]">
      <div className="w-[1291px] bg-[#e6e6e6]">
        <Toolbars />
        <div className="bg-[#f5f5f5]">
          <MainPane />
          <HistPane />
          <DotsPane />
          <SlopePane />
          <DateAxis />
        </div>
        <div className="flex h-[8px] justify-between bg-[#dfe5ec]">
          <span className="w-[8px] bg-[#9aa5b4]" />
          <span className="w-[36px] bg-[#a8b0bc]" />
        </div>
      </div>
    </div>
  )
}
